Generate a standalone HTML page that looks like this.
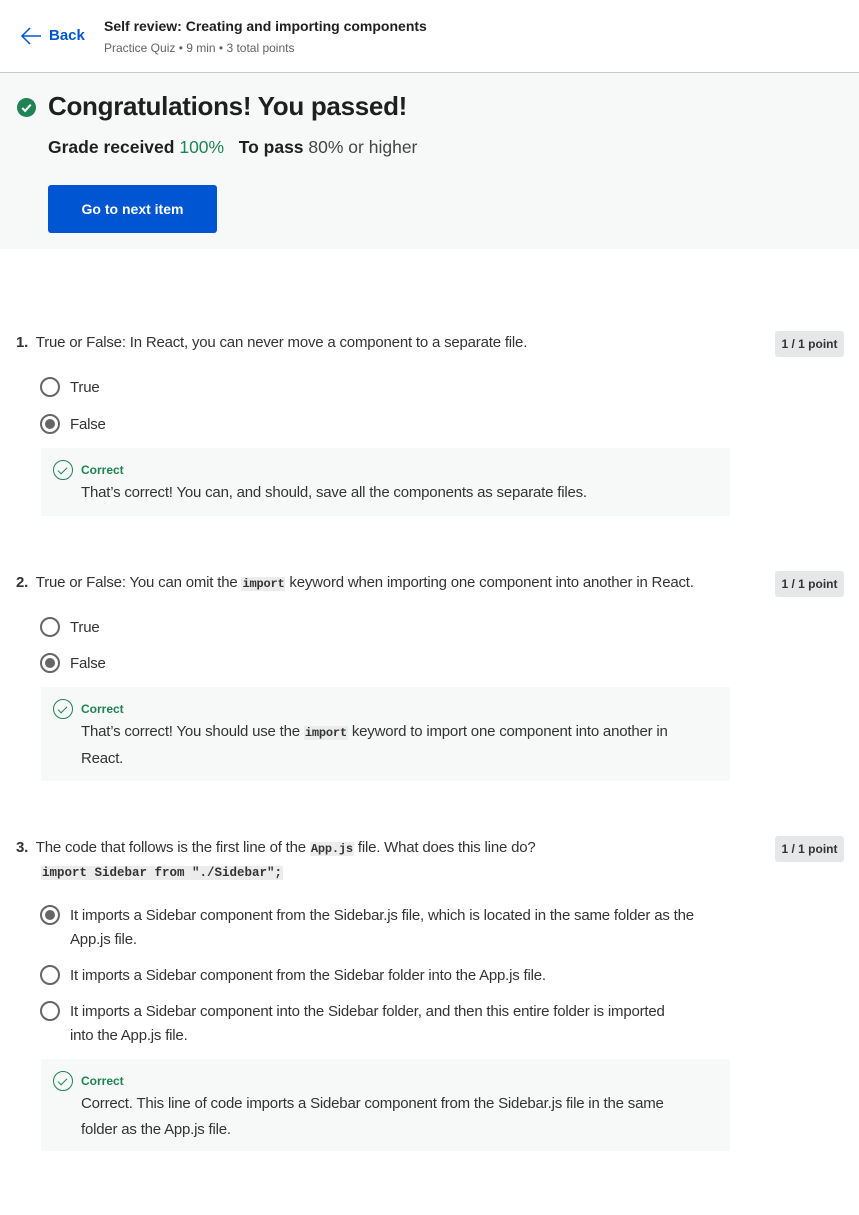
<!DOCTYPE html>
<html><head><meta charset="utf-8"><style>
*{margin:0;padding:0;box-sizing:border-box}
body{width:859px;height:1215px;background:#fff;font-family:"Liberation Sans",sans-serif;color:#1f1f1f;position:relative;overflow:hidden}
.a{position:absolute;white-space:nowrap}
.code{font-family:"Liberation Mono",monospace;background:#ececec;font-size:12px;padding:0 1px;font-weight:bold;color:#333}
.q{font-size:15px;color:#333;letter-spacing:-0.2px}
.num{font-weight:bold}
.pt{position:absolute;left:775px;width:69px;height:26px;background:#e5e7e8;border-radius:3px;font-size:12px;font-weight:bold;text-align:center;line-height:26px;color:#333}
.radio{position:absolute;left:40px;width:20px;height:20px;border:2px solid #666;border-radius:50%}
.radio.on::after{content:"";position:absolute;left:3px;top:3px;width:10px;height:10px;border-radius:50%;background:#666}
.opt{position:absolute;left:70px;font-size:15px;color:#333;line-height:24px;letter-spacing:-0.2px}
.fb{position:absolute;left:41px;width:689px;background:#f6f9f8}
.ck{position:absolute;left:12px;width:20px;height:20px;border:1px solid #1f8354;border-radius:50%}
.ck::after{content:"";position:absolute;left:6px;top:4px;width:4px;height:8px;border:solid #1f8354;border-width:0 1.5px 1.5px 0;transform:rotate(45deg)}
.ct{position:absolute;left:40px;font-size:12px;font-weight:bold;color:#1f8354}
.fx{position:absolute;left:40px;font-size:15px;color:#333;line-height:26px;letter-spacing:-0.2px}
</style></head><body>
<svg class="a" style="left:20px;top:27px" width="22" height="18" viewBox="0 0 22 18"><path d="M10 1 L2 9 L10 17 M2 9 H21" fill="none" stroke="#0056d2" stroke-width="1.5"/></svg>
<div class="a" style="left:49px;top:27px;font-size:15px;font-weight:bold;color:#0056d2">Back</div>
<div class="a" style="left:104px;top:18px;font-size:14px;font-weight:bold;color:#1f1f1f">Self review: Creating and importing components</div>
<div class="a" style="left:104px;top:41px;font-size:12px;color:#636363">Practice Quiz • 9 min • 3 total points</div>
<div class="a" style="left:0;top:72px;width:859px;height:177px;background:#f6f9f8;border-top:1px solid #c8c8c8"></div>
<svg class="a" style="left:17px;top:98px" width="19" height="19" viewBox="0 0 20 20"><circle cx="10" cy="10" r="10" fill="#1f8354"/><path d="M5.5 10.5 L8.5 13.5 L14.5 7" fill="none" stroke="#fff" stroke-width="2.2"/></svg>
<div class="a" style="left:48px;top:91px;font-size:26px;font-weight:bold;color:#1f1f1f;letter-spacing:-0.3px">Congratulations! You passed!</div>
<div class="a" style="left:48px;top:137px;font-size:17.5px;color:#1f1f1f"><b style="font-weight:600">Grade received</b> <span style="color:#1f8354">100%</span> &nbsp; <b style="font-weight:600">To pass</b> <span style="color:#444">80% or higher</span></div>
<div class="a" style="left:48px;top:185px;width:169px;height:48px;background:#0056d2;border-radius:3px;color:#fff;font-size:14px;font-weight:bold;text-align:center;line-height:48px">Go to next item</div>

<div class="a q" style="left:16px;top:334px"><span class="num">1.</span>&nbsp; True or False: In React, you can never move a component to a separate file.</div>
<div class="pt" style="top:331px">1 / 1 point</div>
<div class="radio" style="top:377px"></div><div class="opt" style="top:376px">True</div>
<div class="radio on" style="top:414px"></div><div class="opt" style="top:413px">False</div>
<div class="fb" style="top:448px;height:68px"><div class="ck" style="top:12px"></div><div class="ct" style="top:15px">Correct</div><div class="fx" style="top:32px">That’s correct! You can, and should, save all the components as separate files.</div></div>

<div class="a q" style="left:16px;top:574px"><span class="num">2.</span>&nbsp; True or False: You can omit the <span class="code">import</span> keyword when importing one component into another in React.</div>
<div class="pt" style="top:571px">1 / 1 point</div>
<div class="radio" style="top:617px"></div><div class="opt" style="top:616px">True</div>
<div class="radio on" style="top:653px"></div><div class="opt" style="top:652px">False</div>
<div class="fb" style="top:687px;height:94px"><div class="ck" style="top:12px"></div><div class="ct" style="top:15px">Correct</div><div class="fx" style="top:32px;white-space:normal;width:625px">That’s correct! You should use the <span class="code">import</span> keyword to import one component into another in React.</div></div>

<div class="a q" style="left:16px;top:839px"><span class="num">3.</span>&nbsp; The code that follows is the first line of the <span class="code">App.js</span> file. What does this line do?</div>
<div class="a code" style="left:41px;top:866px;font-size:12.5px">import Sidebar from "./Sidebar";</div>
<div class="pt" style="top:836px">1 / 1 point</div>
<div class="radio on" style="top:905px"></div><div class="opt" style="top:904px;width:650px;white-space:normal">It imports a Sidebar component from the Sidebar.js file, which is located in the same folder as the App.js file.</div>
<div class="radio" style="top:965px"></div><div class="opt" style="top:964px">It imports a Sidebar component from the Sidebar folder into the App.js file.</div>
<div class="radio" style="top:1001px"></div><div class="opt" style="top:1000px;width:610px;white-space:normal">It imports a Sidebar component into the Sidebar folder, and then this entire folder is imported into the App.js file.</div>
<div class="fb" style="top:1059px;height:92px"><div class="ck" style="top:12px"></div><div class="ct" style="top:15px">Correct</div><div class="fx" style="top:32px;white-space:normal;width:610px">Correct. This line of code imports a Sidebar component from the Sidebar.js file in the same folder as the App.js file.</div></div>
</body></html>
